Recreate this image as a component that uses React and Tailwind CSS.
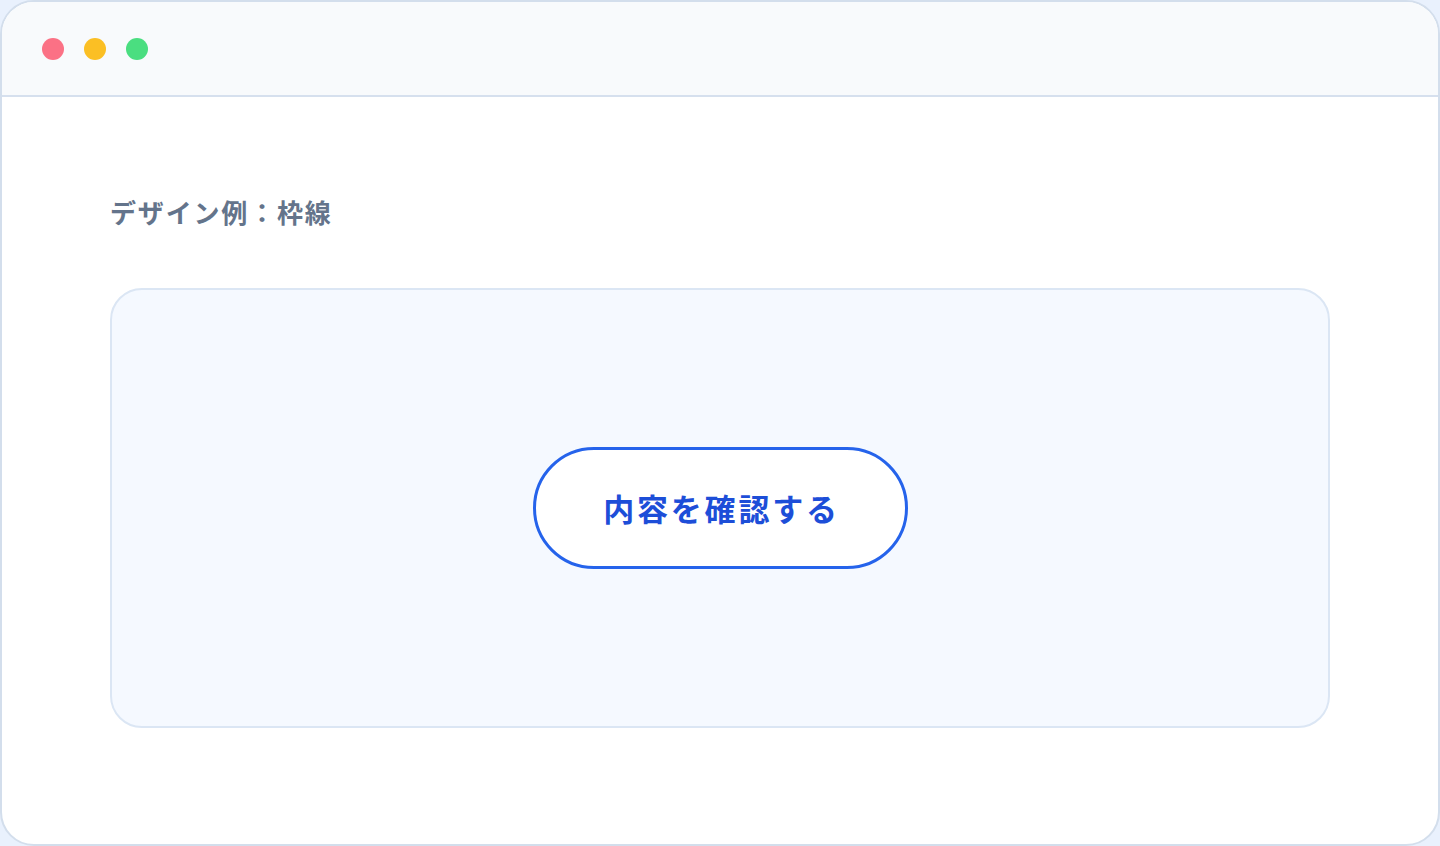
import React from 'react';

const jp = { fontFamily: '"Noto Sans CJK JP", "Noto Sans", sans-serif' };

export default function App() {
  return (
    <div className="w-[1440px] h-[846px] bg-[#e9f1fd]" style={jp}>
      <div className="w-full h-full flex flex-col bg-white border-2 border-[#d3deec] rounded-[34px] overflow-hidden">
        {/* window bar */}
        <div className="h-[95px] shrink-0 flex items-center gap-[20px] pl-[40px] bg-[#f8fafc] border-b-2 border-[#d6e0ee]">
          <span className="w-[22px] h-[22px] rounded-full bg-[#fb7185]" />
          <span className="w-[22px] h-[22px] rounded-full bg-[#fbbf24]" />
          <span className="w-[22px] h-[22px] rounded-full bg-[#4ade80]" />
        </div>

        <div className="flex-1 flex flex-col px-[108px] pt-[97px] pb-[116px]">
          <p className="text-[26px] leading-[36px] font-bold text-[#64748b] tracking-[0.07em]">
            デザイン例：枠線
          </p>
          <div className="mt-[58px] flex-1 flex items-center justify-center bg-[#f5f9ff] border-2 border-[#dbe6f4] rounded-[32px]">
            <button className="w-[375px] h-[122px] rounded-full bg-white border-[3px] border-[#2563eb] text-[31px] font-bold text-[#1d4ed8] tracking-[0.09em] pl-[3px]">
              内容を確認する
            </button>
          </div>
        </div>
      </div>
    </div>
  );
}
